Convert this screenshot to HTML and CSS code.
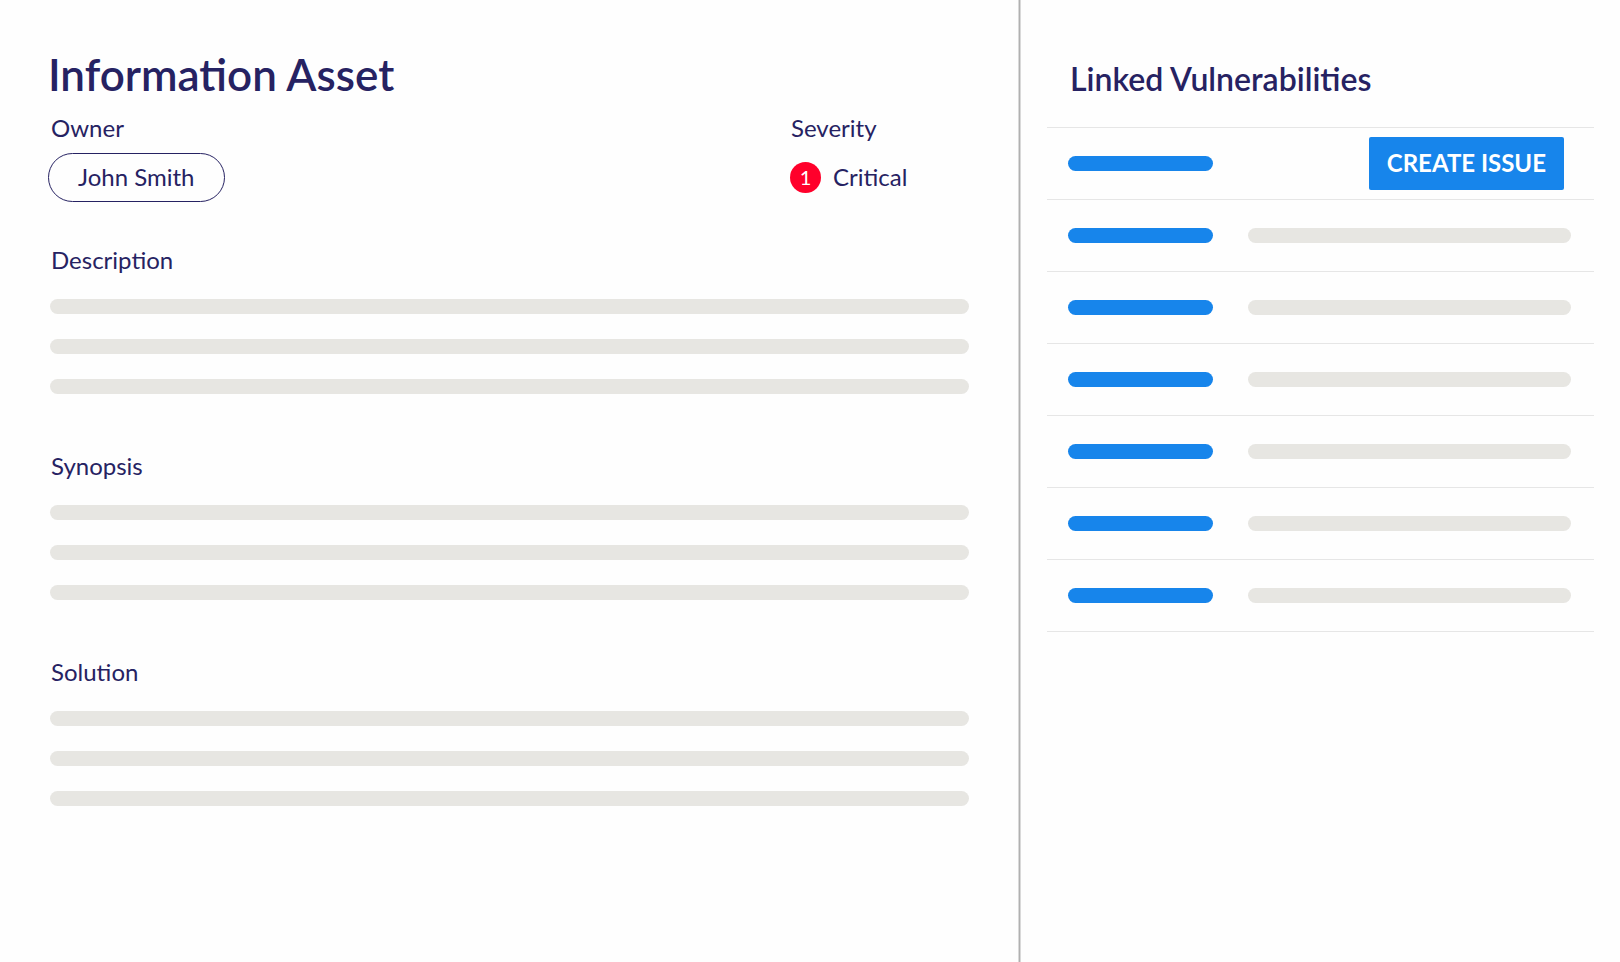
FILE: index.html
```
<!DOCTYPE html>
<html lang="en">
<head>
<meta charset="utf-8">
<meta name="viewport" content="width=device-width, initial-scale=1">
<title>Information Asset</title>
<link rel="stylesheet" href="styles.css">
</head>
<body>
<div class="page">
  <main class="asset">
    <h1 class="asset-title">Information Asset</h1>
    <div class="meta">
      <div class="field">
        <h2 class="label">Owner</h2>
        <button type="button" class="pill">John Smith</button>
      </div>
      <div class="field">
        <h2 class="label">Severity</h2>
        <div class="severity"><span class="badge">1</span><span>Critical</span></div>
      </div>
    </div>
    <div class="sections">
      <section class="section">
        <h2 class="label">Description</h2>
        <div class="lines"><div class="bar"></div><div class="bar"></div><div class="bar"></div></div>
      </section>
      <section class="section">
        <h2 class="label">Synopsis</h2>
        <div class="lines"><div class="bar"></div><div class="bar"></div><div class="bar"></div></div>
      </section>
      <section class="section">
        <h2 class="label">Solution</h2>
        <div class="lines"><div class="bar"></div><div class="bar"></div><div class="bar"></div></div>
      </section>
    </div>
  </main>
  <aside class="linked">
    <h2 class="linked-title">Linked Vulnerabilities</h2>
    <ul class="rows">
      <li class="row"><div class="bar bar-link"></div><button type="button" class="create">CREATE ISSUE</button></li>
      <li class="row"><div class="bar bar-link"></div><div class="bar"></div></li>
      <li class="row"><div class="bar bar-link"></div><div class="bar"></div></li>
      <li class="row"><div class="bar bar-link"></div><div class="bar"></div></li>
      <li class="row"><div class="bar bar-link"></div><div class="bar"></div></li>
      <li class="row"><div class="bar bar-link"></div><div class="bar"></div></li>
      <li class="row"><div class="bar bar-link"></div><div class="bar"></div></li>
    </ul>
  </aside>
</div>
</body>
</html>
```
FILE: styles.css
```
* { box-sizing: border-box; }

body {
  margin: 0;
  background: #fefefe;
  color: #262262;
  font-family: Lato, "Open Sans", sans-serif;
  font-size: 24px;
  line-height: 28px;
}

h1, h2, ul { margin: 0; padding: 0; }

button { font: inherit; cursor: pointer; }

.page {
  display: grid;
  grid-template-columns: minmax(0, 1019fr) minmax(0, 601fr);
  min-height: 100vh;
}

.asset {
  padding: 48px 49px 48px 50px;
  border-right: 1px solid #d9d9d9;
}

.asset-title {
  margin-left: -2px;
  font-size: 44px;
  line-height: 52px;
  font-weight: 600;
}

.meta {
  display: grid;
  grid-template-columns: minmax(0, 1fr) 179px;
  margin-top: 14px;
}

.label {
  padding-left: 1px;
  font-size: 24px;
  font-weight: 400;
}

.pill {
  height: 49px;
  margin: 11px 0 0 -2px;
  padding: 0 29px 2px;
  border: 1px solid #262262;
  border-radius: 25px;
  background: none;
  color: inherit;
}

.severity {
  display: flex;
  align-items: center;
  gap: 12px;
  height: 48px;
  margin-top: 11px;
}

.badge {
  width: 31px;
  height: 31px;
  border-radius: 50%;
  background: #ff002b;
  color: #fff;
  font-size: 20px;
  line-height: 30px;
  text-align: center;
}

.sections {
  display: grid;
  gap: 58px;
  margin-top: 44px;
}

.lines {
  display: grid;
  gap: 25px;
  margin-top: 25px;
}

.bar {
  height: 15px;
  border-radius: 8px;
  background: #e7e6e2;
}

.bar-link { background: #1785eb; }

.linked {
  padding: 60px 26px 48px 27px;
  border-left: 1px solid #b0b0b0;
  box-shadow: inset 1px 0 #d9d9d9;
}

.linked-title {
  padding-left: 23px;
  font-size: 32px;
  line-height: 38px;
  font-weight: 600;
}

.rows {
  margin-top: 29px;
  border-top: 1px solid #e6e6e6;
  list-style: none;
}

.row {
  display: grid;
  grid-template-columns: 145px minmax(0, 1fr);
  align-items: center;
  gap: 35px;
  height: 72px;
  padding: 0 23px 0 21px;
  border-bottom: 1px solid #e6e6e6;
}

.create {
  justify-self: end;
  height: 53px;
  margin-right: 7px;
  padding: 0 18px 2px;
  border: 0;
  border-radius: 2px;
  background: #1785eb;
  color: #fff;
  font-weight: 700;
}
```
